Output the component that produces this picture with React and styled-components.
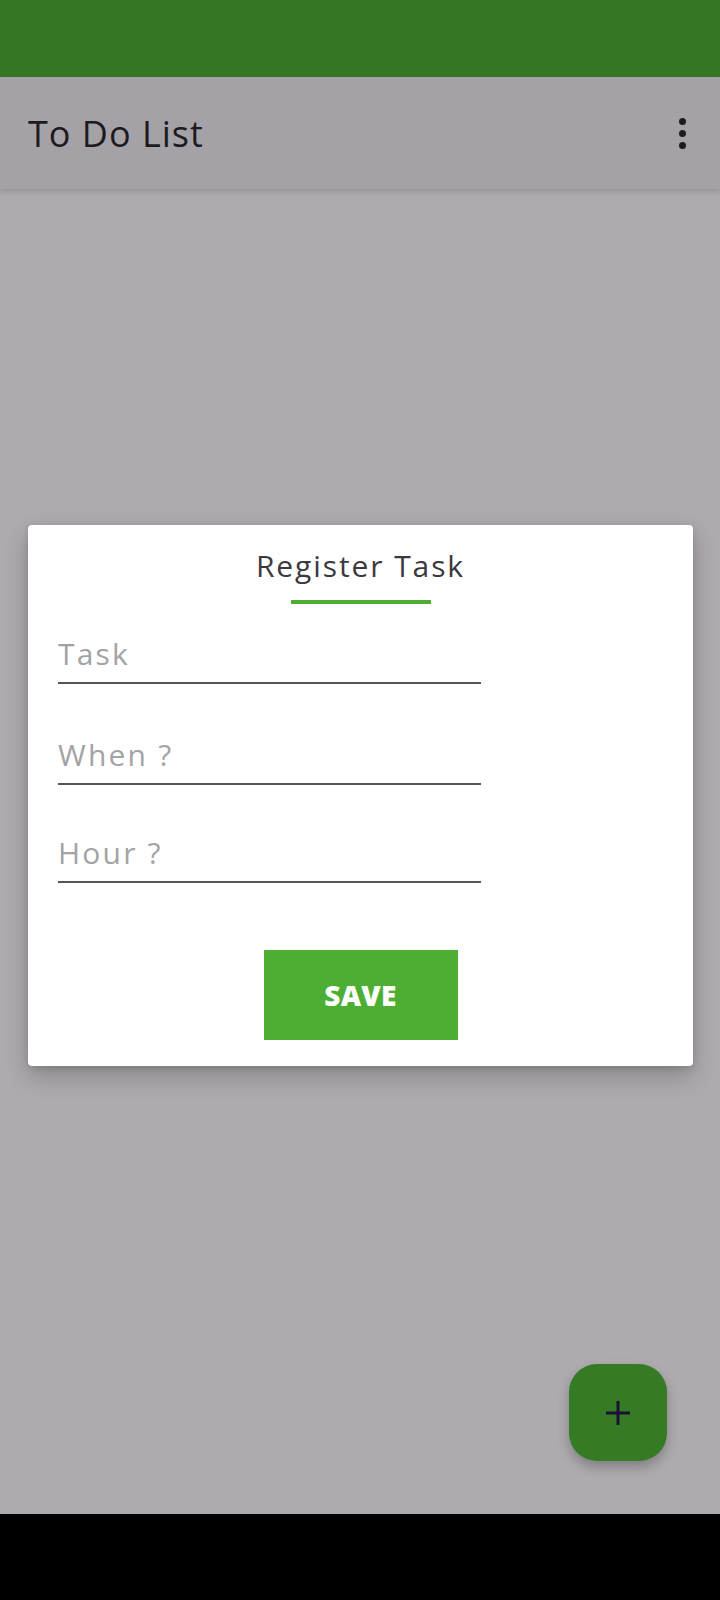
import React from "react";
import styled, { createGlobalStyle } from "styled-components";

const GlobalStyle = createGlobalStyle`
  html, body {
    margin: 0;
    padding: 0;
    background: #000;
  }
  * {
    box-sizing: border-box;
  }
`;

function App() {
  return (
    <Screen>
      <GlobalStyle />
      <StatusBar />
      <AppBar>
        <AppTitle>To Do List</AppTitle>
        <MenuButton aria-label="menu">
          <Dot />
          <Dot />
          <Dot />
        </MenuButton>
      </AppBar>
      <Content>
        <Dialog>
          <DialogTitle>Register Task</DialogTitle>
          <TitleBar />
          <Fields>
            <Field $gap={0}>
              <FieldInput placeholder="Task" />
            </Field>
            <Field $gap={43}>
              <FieldInput placeholder="When ?" />
            </Field>
            <Field $gap={40}>
              <FieldInput placeholder="Hour ?" />
            </Field>
          </Fields>
          <SaveButton>SAVE</SaveButton>
        </Dialog>
        <Fab aria-label="add">
          <svg width="28" height="28" viewBox="0 0 28 28">
            <path
              d="M14 2v24M2 14h24"
              stroke="#1c1038"
              strokeWidth="3"
              fill="none"
            />
          </svg>
        </Fab>
      </Content>
      <NavBar />
    </Screen>
  );
}

export default App;

const Screen = styled.div`
  width: 720px;
  height: 1600px;
  display: flex;
  flex-direction: column;
  background: #aeaaae;
  font-family: "Open Sans", "Noto Sans", sans-serif;
  overflow: hidden;
`;

const StatusBar = styled.div`
  height: 77px;
  background: #347624;
  flex-shrink: 0;
`;

const AppBar = styled.div`
  height: 112px;
  flex-shrink: 0;
  background: #a5a2a7;
  display: flex;
  align-items: center;
  justify-content: space-between;
  padding: 0 28px 0 28px;
  box-shadow: 0 3px 5px rgba(0, 0, 0, 0.12);
  position: relative;
  z-index: 1;
`;

const AppTitle = styled.h1`
  margin: 0;
  font-size: 36px;
  line-height: 48px;
  font-weight: 400;
  color: #1d1b20;
  letter-spacing: 1px;
  margin-top: 2px;
`;

const MenuButton = styled.div`
  display: flex;
  flex-direction: column;
  align-items: center;
  gap: 5px;
  width: 24px;
  margin-right: -2px;
`;

const Dot = styled.span`
  width: 7px;
  height: 7px;
  border-radius: 50%;
  background: #1d1b20;
`;

const Content = styled.div`
  flex: 1;
  position: relative;
  padding: 336px 27px 0 28px;
`;

const Dialog = styled.div`
  background: #fff;
  border-radius: 4px;
  box-shadow: 0 10px 24px rgba(0, 0, 0, 0.22), 0 2px 6px rgba(0, 0, 0, 0.12);
  display: flex;
  flex-direction: column;
  align-items: center;
  padding: 20px 30px 26px 30px;
  height: 541px;
`;

const DialogTitle = styled.h2`
  margin: 0;
  font-size: 30px;
  line-height: 42px;
  font-weight: 400;
  color: #3a3940;
  letter-spacing: 1.9px;
`;

const TitleBar = styled.div`
  width: 140px;
  height: 4px;
  background: #4caf34;
  margin-top: 13px;
`;

const Fields = styled.div`
  align-self: stretch;
  display: flex;
  flex-direction: column;
  margin-top: 22px;
`;

const Field = styled.div`
  width: 423px;
  height: 58px;
  margin-top: ${(p) => p.$gap}px;
  border-bottom: 2px solid #555459;
  display: flex;
  align-items: center;
`;

const FieldInput = styled.input`
  border: none;
  outline: none;
  background: transparent;
  width: 100%;
  padding: 0;
  font-family: inherit;
  font-size: 30px;
  font-weight: 400;
  color: #333;
  letter-spacing: 2.2px;
  &::placeholder {
    color: #a3a3a6;
  }
`;

const SaveButton = styled.button`
  margin-top: 67px;
  width: 194px;
  height: 91px;
  border: none;
  background: #4caf33;
  color: #fff;
  font-family: inherit;
  font-weight: 800;
  font-size: 28px;
  letter-spacing: 0.3px;
`;

const Fab = styled.div`
  position: absolute;
  right: 53px;
  bottom: 53px;
  width: 98px;
  height: 97px;
  border-radius: 28px;
  background: #357a24;
  display: flex;
  align-items: center;
  justify-content: center;
  box-shadow: 0 6px 12px rgba(0, 0, 0, 0.25);
`;

const NavBar = styled.div`
  height: 86px;
  flex-shrink: 0;
  background: #000;
`;
